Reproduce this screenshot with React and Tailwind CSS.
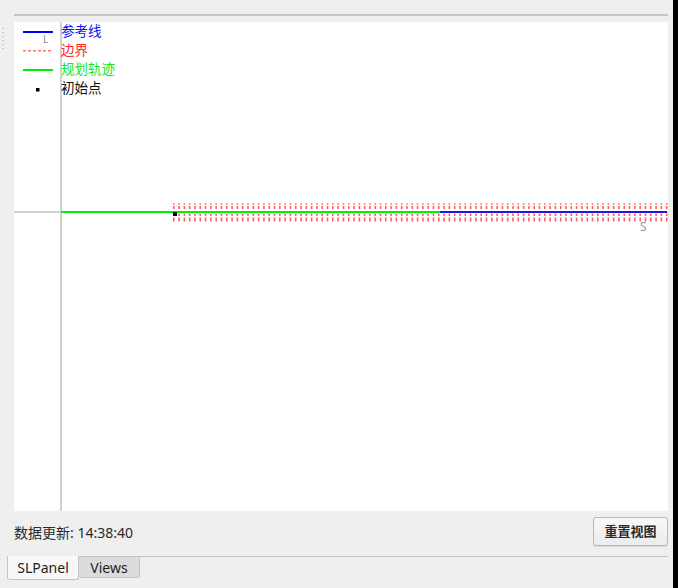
import React from "react";

const cjk = { fontFamily: '"Noto Sans", "Noto Sans CJK SC", sans-serif' };

function Chart() {
  const W = 654;
  const H = 489;
  const dashes = [];
  for (let x = 159; x <= 652; x += 5.3) {
    const xx = Math.round(x * 10) / 10;
    dashes.push(
      <g key={x}>
        <rect x={xx} y={181} width={1.6} height={2} fill="#ff8a8a" />
        <rect x={xx} y={184} width={1.6} height={3} fill="#ff6060" />
        <rect x={xx} y={191.5} width={1.6} height={2.5} fill="#ff6060" />
        <rect x={xx} y={195.5} width={1.6} height={4} fill="#ff6060" />
      </g>
    );
  }
  return (
    <svg width={W} height={H} className="block">
      <rect x={0} y={0} width={W} height={H} fill="#ffffff" />
      <rect x={46} y={0} width={2} height={H} fill="#d2d2d2" />
      <rect x={0} y={189} width={W} height={2} fill="#d2d2d2" />
      {dashes}
      <rect x={47} y={189} width={380} height={2} fill="#00f000" />
      <rect x={426} y={189} width={227} height={2} fill="#1a1ae6" />
      <rect x={159} y={190} width={4} height={4} fill="#000000" />
      {/* legend lines */}
      <rect x={9} y={9} width={30} height={2} fill="#0000ff" />
      {[0, 1, 2, 3, 4, 5].map((i) => (
        <rect key={i} x={9 + i * 5} y={28} width={3} height={1.5} fill="#ff7070" />
      ))}
      <rect x={9} y={47} width={30} height={2} fill="#00ee00" />
      <rect x={22} y={66} width={3.5} height={3.5} fill="#000000" />
    </svg>
  );
}

export default function App() {
  return (
    <div className="w-[678px] h-[588px] bg-[#efefef] flex overflow-hidden" style={cjk}>
      <div className="flex-1 flex flex-col relative">
        <div className="absolute left-[2px] top-[28px] flex flex-col gap-[3px]">
          {[0, 1, 2, 3, 4, 5].map((i) => (
            <div key={i} className="w-[2px] h-[1px] bg-[#c8c8c8]" />
          ))}
        </div>
        <div className="pl-[14px] pr-[5px] flex flex-col">
          <div className="mt-[14px] h-[2px] bg-[#c6c6c6]" />
          <div className="mt-[6px] relative w-[654px] h-[489px]">
            <Chart />
            <div className="absolute left-[47px] top-[0px] flex flex-col text-[13.5px] leading-[19px]">
              <span className="text-[#1010f0]">参考线</span>
              <span className="text-[#ff2626]">边界</span>
              <span className="text-[#19e619]">规划轨迹</span>
              <span className="text-[#111111]">初始点</span>
            </div>
            <span className="absolute left-[29px] top-[12px] text-[10px] leading-none text-[#8a8a8a]">L</span>
            <span className="absolute left-[626px] top-[199px] text-[12px] leading-none text-[#9a9a9a]">S</span>
          </div>
          <div className="mt-[6px] flex items-center justify-between">
            <span className="text-[14px] text-[#2a2a2a] leading-none mt-[3px]">数据更新: 14:38:40</span>
            <button className="w-[75px] h-[29px] rounded-[3px] border border-[#b9b9b9] bg-gradient-to-b from-[#f8f8f8] to-[#ececec] text-[13px] text-[#2a2a2a] font-semibold shadow-[0_1px_0_#d8d8d8]">
              重置视图
            </button>
          </div>
        </div>
        <div className="mt-[10px] relative h-[32px]">
          <div className="absolute left-[80px] right-[5px] top-0 h-[1px] bg-[#c4c4c4]" />
          <div className="flex pl-[7px] items-start">
            <div className="w-[72px] h-[24px] bg-[#f8f8f8] border border-t-0 border-[#c4c4c4] rounded-b-[3px] flex items-center justify-center text-[14px] text-[#1e1e1e]">
              SLPanel
            </div>
            <div className="w-[61px] h-[22px] bg-[#dcdcdc] border border-[#c4c4c4] border-l-0 rounded-b-[3px] flex items-center justify-center text-[14px] text-[#1e1e1e]">
              Views
            </div>
          </div>
        </div>
      </div>
      <div className="w-[5px] bg-black" />
    </div>
  );
}
